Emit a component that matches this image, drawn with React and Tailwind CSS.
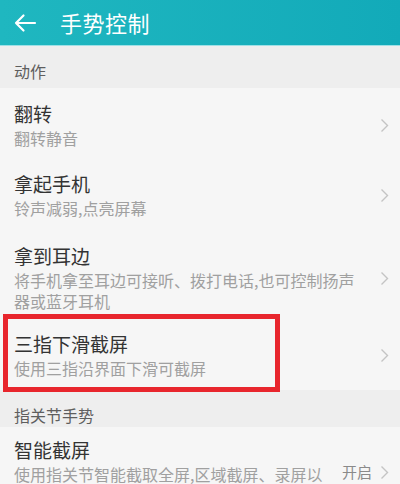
import React from 'react';

const font = { fontFamily: '"Noto Sans CJK SC", "Noto Sans", sans-serif' };

// thin gray chevron on the right of each row
const Chevron = () => (
  <svg width="9" height="15" viewBox="0 0 9 15" className="shrink-0">
    <polyline points="1.5,1.5 7.5,7.5 1.5,13.5" fill="none" stroke="#c4c4c4" strokeWidth="1.4" />
  </svg>
);

const Row = ({ title, sub, right, subWidth = 'max-w-[322px]', className = '' }) => (
  <div className={`flex items-center pl-[14px] pr-[11px] bg-[#f6f6f6] ${className}`}>
    <div className="flex-1 min-w-0">
      <div className="text-[19px] leading-[24px] text-[#333333]">{title}</div>
      <div className={`text-[16px] leading-[21px] text-[#a0a0a0] mt-[2px] ${subWidth}`}>{sub}</div>
    </div>
    {right && <span className="text-[15px] text-[#8a8a8a] ml-[10px] mr-[8px]">{right}</span>}
    <Chevron />
  </div>
);

const Section = ({ children, className = '' }) => (
  <div className={`pl-[14px] bg-[#eeeeee] text-[16px] leading-[20px] text-[#5e5e5e] ${className}`}>{children}</div>
);

export default function App() {
  return (
    <div className="w-[400px] h-[484px] overflow-hidden bg-[#f6f6f6]" style={font}>
      {/* top bar */}
      <div className="h-[46px] flex items-center bg-gradient-to-r from-[#1fb7c0] to-[#12aab9] border-b border-[#9fe0e6]">
        <svg width="24" height="20" viewBox="0 0 24 20" className="ml-[13px]">
          <path d="M22 10H3M10.5 2.5L3 10l7.5 7.5" fill="none" stroke="#ffffff" strokeWidth="2.2" strokeLinecap="round" strokeLinejoin="round" />
        </svg>
        <span className="ml-[23px] text-[22px] text-white tracking-[0.5px]">手势控制</span>
      </div>

      <Section className="pt-[15px] pb-[7px]">动作</Section>

      <Row title="翻转" sub="翻转静音" className="pt-[14px] pb-[12px]" />
      <Row title="拿起手机" sub="铃声减弱,点亮屏幕" className="pt-[11px] pb-[11px]" />
      <Row
        title="拿到耳边"
        sub="将手机拿至耳边可接听、拨打电话,也可控制扬声器或蓝牙耳机"
        subWidth="max-w-[350px]"
        className="pt-[14px] pb-[9px]"
      />

      <div className="relative">
        <Row title="三指下滑截屏" sub="使用三指沿界面下滑可截屏" className="pt-[11px] pb-[11px]" />
        <div className="absolute left-[3px] top-[-7px] w-[277px] h-[78px] border-[5px] border-[#e8262d] pointer-events-none" />
      </div>

      <Section className="pt-[15px] pb-[2px]">指关节手势</Section>

      <Row
        title="智能截屏"
        sub="使用指关节智能截取全屏,区域截屏、录屏以及长截屏"
        subWidth="max-w-[316px]"
        right="开启"
        className="pt-[11px] pb-[10px]"
      />
    </div>
  );
}
